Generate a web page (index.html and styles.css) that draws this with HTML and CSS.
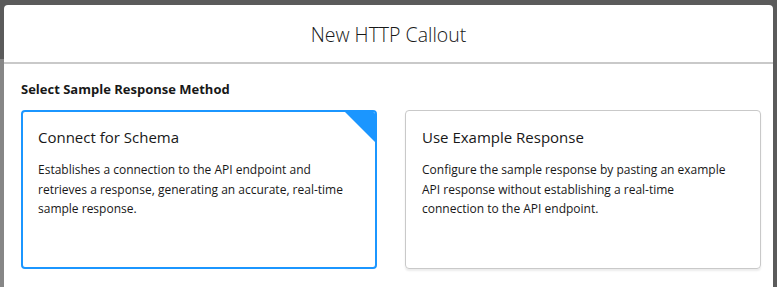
FILE: index.html
```html
<!DOCTYPE html>
<html lang="en">
    <head>
        <meta charset="UTF-8">
        <meta name="viewport" content="width=device-width, initial-scale=1.0">
        <title>New HTTP Callout</title>
        <link rel="stylesheet" href="styles.css">
    </head>
    <body>

        <!-- Ventana modal -->
        <div class="modal">
            <div class="modal-header">
                <h2>New HTTP Callout</h2>
            </div>

            <div class="modal-body">
                <div class="section-label">Select Sample Response Method</div>

                <!-- Opciones -->
                <div class="options">
                    <div class="option selected">
                        <div class="option-title">Connect for Schema</div>
                        <p>Establishes a connection to the API endpoint and retrieves a response, generating an accurate, real-time sample response.</p>
                    </div>
                    <div class="option">
                        <div class="option-title">Use Example Response</div>
                        <p>Configure the sample response by pasting an example API response without establishing a real-time connection to the API endpoint.</p>
                    </div>
                </div>
            </div>
        </div>

    </body>
</html>
```

FILE: styles.css
```css
html, body {
    height: 100%;
}

body {
    font-family: "Open Sans", "Noto Sans", sans-serif;
    color: #181818;
    margin: 0;
    padding: 5px 4px 0 4px;
    box-sizing: border-box;
    overflow: hidden;
    background:
        linear-gradient(to bottom, #5b5b5b 0, #5b5b5b 59px, #868686 59px) left top / 4px 100% no-repeat,
        #5b5b5b;
}

.modal {
    background-color: #fff;
    border-radius: 4px 4px 0 0;
    height: 100%;
}

.modal-header {
    height: 57px;
    border-bottom: 2px solid #c9c9c9;
    display: flex;
    justify-content: center;
    align-items: center;
}

.modal-header h2 {
    margin: 0;
    font-size: 19.5px;
    font-weight: 300;
    color: #181818;
    padding-top: 1px;
}

.modal-body {
    padding: 16px 12px 0 17px;
}

.section-label {
    font-size: 13px;
    font-weight: 700;
    color: #181818;
    line-height: 19px;
    margin-bottom: 11px;
}

.options {
    display: grid;
    grid-template-columns: 1fr 1fr;
    gap: 28px;
}

.option {
    position: relative;
    height: 159px;
    box-sizing: border-box;
    border: 1px solid #c9c9c9;
    border-radius: 4px;
    padding: 15px 16px;
    box-shadow: 0 2px 2px rgba(0, 0, 0, 0.08);
    overflow: hidden;
}

.option.selected {
    border: 2px solid #1b96ff;
    padding: 14px 15px;
    box-shadow: none;
}

/* esquina azul de la opcion elegida */
.option.selected::after {
    content: "";
    position: absolute;
    top: 0;
    right: 0;
    border-style: solid;
    border-width: 0 30px 30px 0;
    border-color: transparent #1b96ff transparent transparent;
}

.option-title {
    font-size: 15px;
    font-weight: 400;
    line-height: 22px;
    margin-bottom: 12px;
}

.option p {
    margin: 0;
    padding-right: 8px;
    font-size: 12px;
    line-height: 19.5px;
}
```
